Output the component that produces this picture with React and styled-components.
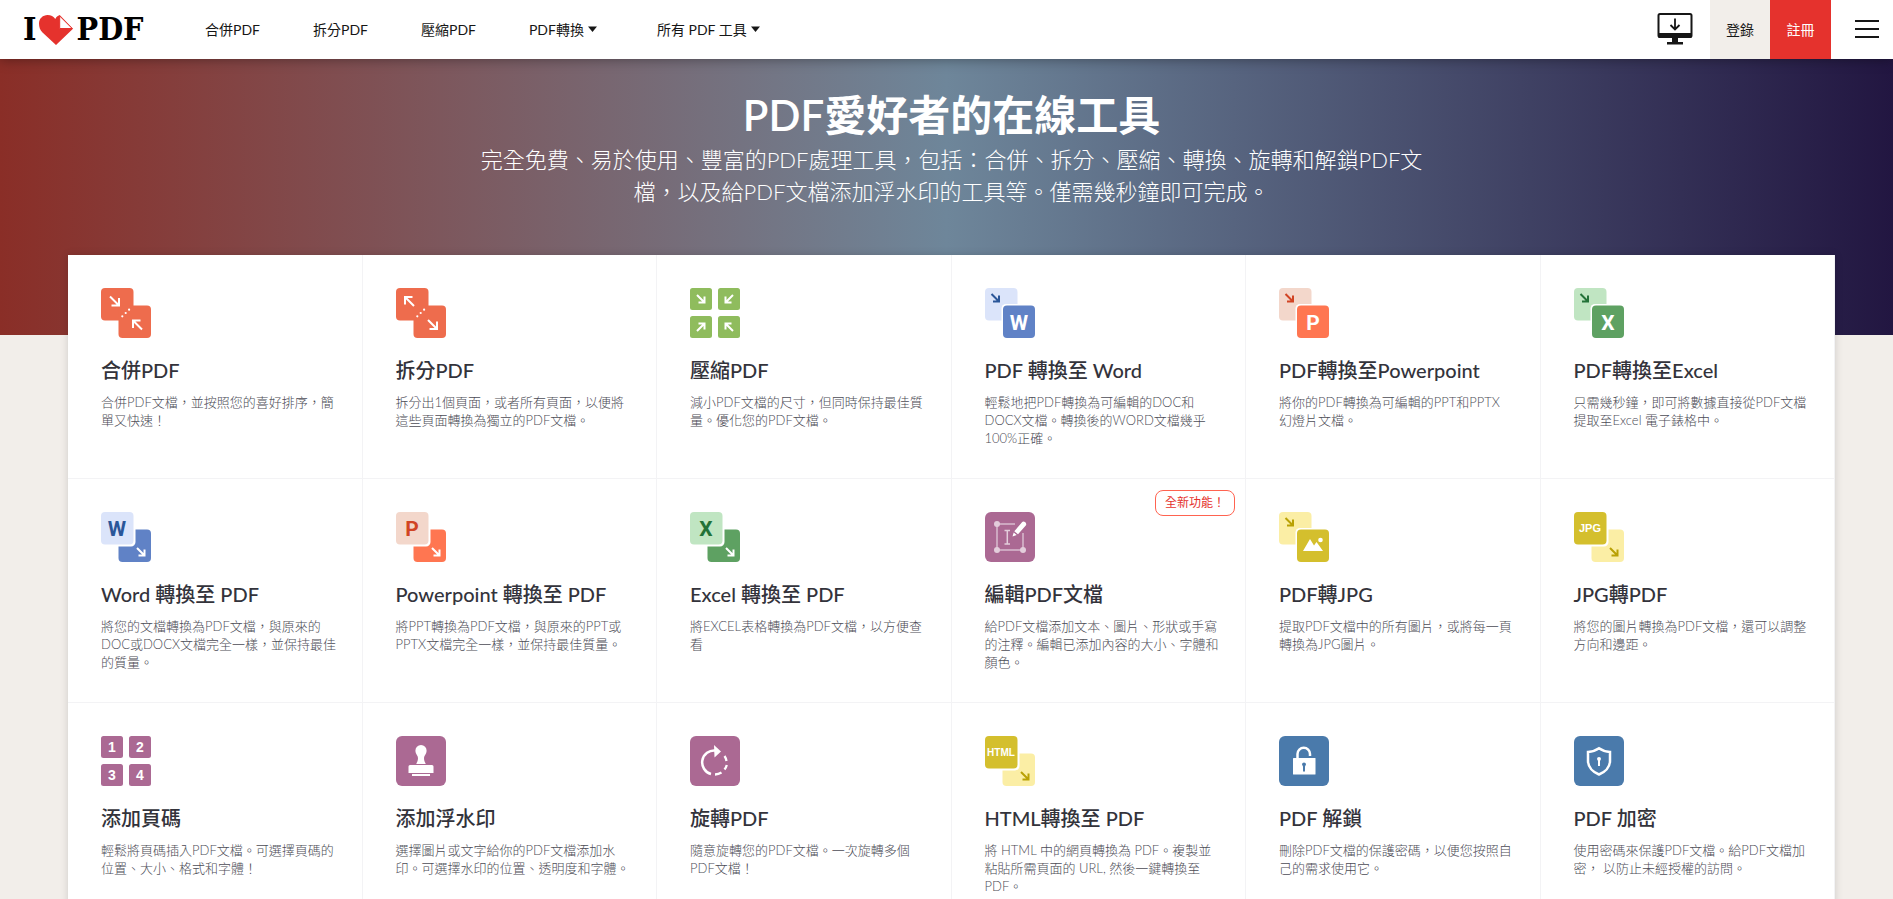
import React from "react";
import styled, { createGlobalStyle } from "styled-components";

const GlobalStyle = createGlobalStyle`
  *, *::before, *::after { box-sizing: border-box; }
  body {
    margin: 0;
    background: #f2eeea;
    color: #33333b;
    font-family: Lato, "Noto Sans CJK TC", sans-serif;
  }
  a { color: inherit; text-decoration: none; }
`;

const Page = styled.div`
  height: 100vh;
  display: flex;
  flex-direction: column;
`;

const Header = styled.header`
  position: relative;
  z-index: 2;
  flex: none;
  display: flex;
  align-items: stretch;
  height: 59px;
  background: #fff;
  box-shadow: 0 0 12px rgba(0, 0, 0, 0.4);
`;

const Logo = styled.a`
  display: flex;
  align-items: center;
  gap: 2px;
  width: 178px;
  padding-left: 23px;
  color: #000;
  font: bold 32px/59px "DejaVu Serif Condensed", "DejaVu Serif", serif;
`;

const Nav = styled.nav`
  display: flex;
  flex: 1;
`;

const NavLink = styled.a`
  display: flex;
  align-items: center;
  gap: 4px;
  padding: 0 26px 2px 27px;
  color: #161616;
  font-size: 14px;
  &[aria-haspopup] { padding-right: 33px; }
`;

const Actions = styled.div`
  display: flex;
`;

const IconLink = styled.a`
  display: flex;
  align-items: center;
  padding: 0 17px 2px;
`;

const AuthLink = styled.a`
  display: flex;
  align-items: center;
  justify-content: center;
  width: ${(p) => (p.$primary ? 61 : 60)}px;
  padding-bottom: 2px;
  background: ${(p) => (p.$primary ? "#e5322d" : "#f2eeea")};
  color: ${(p) => (p.$primary ? "#fff" : "#161616")};
  font-size: 14px;
`;

const MenuButton = styled.button`
  display: flex;
  align-items: center;
  padding: 0 14px 2px 24px;
  border: 0;
  background: none;
  cursor: pointer;
`;

const Main = styled.main`
  flex: 1;
  min-height: 0;
  overflow-y: auto;
  scrollbar-width: none;
`;

const Hero = styled.section`
  height: 276px;
  padding: 28px 58px 0 68px;
  background: linear-gradient(90deg, #8a2e27 0%, #6e869a 50%, #221641 100%);
  color: #fff;
  text-align: center;
`;

const HeroTitle = styled.h1`
  margin: 0;
  font-size: 42px;
  font-weight: 600;
  line-height: 56px;
`;

const HeroText = styled.p`
  margin: 1px auto 0;
  font-size: 22px;
  font-weight: 300;
  line-height: 32px;
  white-space: pre-line;
`;

const Tools = styled.section`
  display: grid;
  grid-template-columns: repeat(6, 1fr);
  margin: -80px 58px 32px 68px;
  background: #fff;
  box-shadow: 0 0 8px rgba(0, 0, 0, 0.15);
`;

const Card = styled.a`
  position: relative;
  min-height: 224px;
  padding: 33px 16px 31px 33px;
  border-right: 1px solid #f3f3f5;
  border-bottom: 1px solid #f3f3f5;
  svg { display: block; }
`;

const CardTitle = styled.h3`
  margin: 19px 0 10px;
  color: #33333b;
  font-size: 20px;
  font-weight: 500;
  line-height: 26px;
`;

const CardText = styled.p`
  margin: 0;
  color: #4c4c56;
  font-size: 13px;
  font-weight: 300;
  line-height: 18px;
  white-space: pre-line;
`;

const NewBadge = styled.span`
  position: absolute;
  top: 11px;
  right: 10px;
  padding: 0 9px;
  border: 1px solid #ff6350;
  border-radius: 8px;
  color: #e5322d;
  font-size: 12px;
  line-height: 24px;
`;

const Caret = () => (
  <svg width="9" height="6" viewBox="0 0 9 6" aria-hidden="true">
    <path d="M0 0.5h9L4.5 6z" fill="#161616" />
  </svg>
);

const Heart = () => (
  <svg width="36" height="32" viewBox="0 0 36 32" aria-label="love">
    <path
      d="M1 9.500C1 4.500 5 1 9.500 1c3.500 0 6 1.600 7.800 4 1-1.900 2.300-3 4.400-3.900L35 14.700 18 31 4.500 18.500C2 16 1 13 1 9.500z"
      fill="#e5322d"
    />
    <path d="M21.700 2v12.500h12.500z" fill="#fff" stroke="#e5322d" strokeWidth="1" strokeLinejoin="round" />
  </svg>
);

const Desktop = () => (
  <svg width="36" height="32" viewBox="0 0 36 32" fill="none" aria-hidden="true">
    <rect x="1.500" y="1" width="33" height="23" rx="1.500" stroke="#161616" strokeWidth="2" />
    <path d="M1 20h34v3a2 2 0 0 1-2 2H3a2 2 0 0 1-2-2zM15 25h6v4h5v2.500H10V29h5z" fill="#161616" />
    <path d="M18 5.500V16M13.500 12l4.500 4.500 4.500-4.500" stroke="#161616" strokeWidth="1.800" />
  </svg>
);

const Burger = () => (
  <svg width="24" height="18" viewBox="0 0 24 18" aria-hidden="true">
    <path d="M0 1h24M0 9h24M0 17h24" stroke="#161616" strokeWidth="2" />
  </svg>
);

/* Arrow with its tip at (x, y); (dx, dy) gives the direction, len the shaft's reach. */
const Arrow = ({ x, y, dx = 1, dy = 1, len = 9, color = "#fff", w = 2 }) => (
  <path
    d={`M${x - dx * len} ${y - dy * len}L${x} ${y}M${x} ${y - dy * (len - 1.500)}V${y}H${x - dx * (len - 1.500)}`}
    fill="none"
    stroke={color}
    strokeWidth={w}
  />
);

const Icon = ({ children }) => (
  <svg width="50" height="50" viewBox="0 0 50 50" aria-hidden="true">
    {children}
  </svg>
);

const PairIcon = ({ split }) => (
  <Icon>
    <rect width="32.500" height="32.500" rx="4" fill="#ee6c4d" />
    <rect x="17.500" y="17.500" width="32.500" height="32.500" rx="4" fill="#ee6c4d" />
    {[[21.300, 28.300], [24.700, 25], [28.100, 21.700]].map(([x, y]) => (
      <circle key={x} cx={x} cy={y} r="1.100" fill="#fff" />
    ))}
    {split ? (
      <>
        <Arrow x={9} y={9} dx={-1} dy={-1} />
        <Arrow x={41} y={41} />
      </>
    ) : (
      <>
        <Arrow x={18} y={17.500} />
        <Arrow x={32} y={32.500} dx={-1} dy={-1} />
      </>
    )}
  </Icon>
);

const quadSpots = [[0, 0], [28, 0], [0, 28], [28, 28]];

const CompressIcon = () => (
  <Icon>
    {quadSpots.map(([x, y]) => (
      <g key={`${x}-${y}`}>
        <rect x={x} y={y} width="22" height="22" rx="2.500" fill="#8fbc5d" />
        <Arrow
          x={x ? x + 7.500 : x + 14.500}
          y={y ? y + 7.500 : y + 14.500}
          dx={x ? -1 : 1}
          dy={y ? -1 : 1}
          len={7.500}
        />
      </g>
    ))}
  </Icon>
);

const NumbersIcon = () => (
  <Icon>
    {quadSpots.map(([x, y], i) => (
      <g key={`${x}-${y}`}>
        <rect x={x} y={y} width="22" height="22" rx="2.500" fill="#ab6993" />
        <text x={x + 11} y={y + 16} textAnchor="middle" fontFamily="Liberation Sans" fontWeight="700" fontSize="14" fill="#fff">
          {i + 1}
        </text>
      </g>
    ))}
  </Icon>
);

const Letter = ({ cx, cy, color, children, size = 21 }) => (
  <text
    x={cx}
    y={cy + size * 0.360}
    textAnchor="middle"
    fontFamily={size < 15 ? "Liberation Sans" : "Roboto"}
    fontWeight="700"
    fontSize={size}
    fill={color}
  >
    {children}
  </text>
);

const Picture = () => (
  <>
    <path d="M24 39l7-12 4 6.500 2.500-3.500L44 39z" fill="#fff" />
    <circle cx="41.500" cy="28" r="2.300" fill="#fff" />
  </>
);

/* A page behind with an arrow, and the target format's page in front at the lower right. */
const FromPdfIcon = ({ pale, solid, ink, letter }) => (
  <Icon>
    <rect width="32.500" height="32.500" rx="4" fill={pale} />
    <Arrow x={14} y={13.500} len={7.500} color={ink} />
    <rect x="16.500" y="16" width="36" height="36" rx="4.500" fill="#fff" />
    <rect x="18" y="17.500" width="32" height="32.500" rx="4" fill={solid} />
    {letter ? <Letter cx={34} cy={34} color="#fff">{letter}</Letter> : <Picture />}
  </Icon>
);

/* The source format's page in front at the upper left, the arrow on the page behind. */
const ToPdfIcon = ({ front, back, ink, arrow, letter, size }) => (
  <Icon>
    <rect x="17.500" y="17.500" width="32.500" height="32.500" rx="4" fill={back} />
    <Arrow x={43.500} y={43.500} len={7.500} color={arrow} />
    <rect x="-2" y="-2" width="36.500" height="36.500" rx="4.500" fill="#fff" />
    <rect width="32.500" height="32.500" rx="4" fill={front} />
    <Letter cx={16} cy={16} color={ink} size={size}>{letter}</Letter>
  </Icon>
);

const EditIcon = () => (
  <Icon>
    <rect width="50" height="50" rx="6" fill="#ab6993" />
    <path d="M12 12h18M12 12v26h26V21" fill="none" stroke="#d9bccf" strokeWidth="1.500" />
    <path d="M19.500 18.500h5.500M19.500 32h5.500M22.300 18.500V32" stroke="#e3cddb" strokeWidth="1.500" />
    {[[12, 12], [12, 38], [38, 38]].map(([x, y]) => (
      <circle key={`${x}-${y}`} cx={x} cy={y} r="3" fill="#e3cddb" />
    ))}
    <path d="M37 10.200c1.500-1.700 5.200.6 4 3L33 22.200l-3.700-2.900zM28.700 20.500l3 2.400-4.200 1.600z" fill="#fff" />
  </Icon>
);

const StampIcon = () => (
  <Icon>
    <rect width="50" height="50" rx="6" fill="#ab6993" />
    <path
      d="M25 9a5.700 5.700 0 0 1 5.600 6c0 3-2.600 4.500-2.600 7 0 2.600.8 4 1.800 6H20.200c1-2 1.800-3.400 1.800-6 0-2.500-2.600-4-2.600-7A5.700 5.700 0 0 1 25 9zM14 29h22a1.500 1.500 0 0 1 1.500 1.500V37h-25v-6.500A1.500 1.500 0 0 1 14 29zM16 38h18v2H16z"
      fill="#fff"
    />
  </Icon>
);

const RotateIcon = () => (
  <Icon>
    <rect width="50" height="50" rx="6" fill="#ab6993" />
    <path d="M25.500 14.500A12 12 0 0 0 21 38" fill="none" stroke="#fff" strokeWidth="2.500" />
    <path d="M24 9l7 6.500-6.500 6z" fill="#fff" />
    <path d="M34.500 20a12 12 0 0 1 2 5M36.800 29a12 12 0 0 1-2.300 4.500M31.500 36.500a12 12 0 0 1-6.500 2" fill="none" stroke="#fff" strokeWidth="2.300" />
  </Icon>
);

const Keyhole = ({ x, y, color }) => (
  <path d={`M${x - 2} ${y}a2 2 0 1 1 4 0l-1 2v5h-2v-5z`} fill={color} />
);

const UnlockIcon = () => (
  <Icon>
    <rect width="50" height="50" rx="6" fill="#4a7aab" />
    <path d="M18.500 22.500V18a6 6 0 0 1 12.500 0v2" fill="none" stroke="#fff" strokeWidth="2.500" />
    <rect x="14" y="22" width="22.500" height="16.500" rx="0.500" fill="#fff" />
    <Keyhole x={25} y={28.500} color="#4a7aab" />
  </Icon>
);

const ProtectIcon = () => (
  <Icon>
    <rect width="50" height="50" rx="6" fill="#4a7aab" />
    <path d="M25 12.300c3.500 2.500 7 3.400 11 3.700v9c0 6-5 11-11 13.500C19 36 14 31 14 25v-9c4-.3 7.500-1.200 11-3.700z" fill="none" stroke="#fff" strokeWidth="2.500" />
    <Keyhole x={25} y={23} color="#fff" />
  </Icon>
);

const word = { pale: "#dbe4fa", solid: "#6082c6", ink: "#2a5699" };
const ppt = { pale: "#f3d7cb", solid: "#ff7651", ink: "#d14424" };
const xls = { pale: "#c0e5c2", solid: "#5ea162", ink: "#237238" };
const jpg = { pale: "#fbeea5", solid: "#d4bf2d", ink: "#b9a105" };

const tools = [
  { title: "合併PDF", text: "合併PDF文檔，並按照您的喜好排序，簡\n單又快速！", icon: <PairIcon /> },
  { title: "拆分PDF", text: "拆分出1個頁面，或者所有頁面，以便將\n這些頁面轉換為獨立的PDF文檔。", icon: <PairIcon split /> },
  { title: "壓縮PDF", text: "減小PDF文檔的尺寸，但同時保持最佳質\n量。優化您的PDF文檔。", icon: <CompressIcon /> },
  { title: "PDF 轉換至 Word", text: "輕鬆地把PDF轉換為可編輯的DOC和\nDOCX文檔。轉換後的WORD文檔幾乎\n100%正確。", icon: <FromPdfIcon {...word} letter="W" /> },
  { title: "PDF轉換至Powerpoint", text: "將你的PDF轉換為可編輯的PPT和PPTX\n幻燈片文檔。", icon: <FromPdfIcon {...ppt} letter="P" /> },
  { title: "PDF轉換至Excel", text: "只需幾秒鐘，即可將數據直接從PDF文檔\n提取至Excel 電子錶格中。", icon: <FromPdfIcon {...xls} letter="X" /> },
  { title: "Word 轉換至 PDF", text: "將您的文檔轉換為PDF文檔，與原來的\nDOC或DOCX文檔完全一樣，並保持最佳\n的質量。", icon: <ToPdfIcon front={word.pale} back={word.solid} ink={word.ink} arrow="#fff" letter="W" /> },
  { title: "Powerpoint 轉換至 PDF", text: "將PPT轉換為PDF文檔，與原來的PPT或\nPPTX文檔完全一樣，並保持最佳質量。", icon: <ToPdfIcon front={ppt.pale} back={ppt.solid} ink={ppt.ink} arrow="#fff" letter="P" /> },
  { title: "Excel 轉換至 PDF", text: "將EXCEL表格轉換為PDF文檔，以方便查\n看", icon: <ToPdfIcon front={xls.pale} back={xls.solid} ink={xls.ink} arrow="#fff" letter="X" /> },
  { title: "編輯PDF文檔", text: "給PDF文檔添加文本、圖片、形狀或手寫\n的注釋。編輯已添加內容的大小、字體和\n顏色。", icon: <EditIcon />, isNew: true },
  { title: "PDF轉JPG", text: "提取PDF文檔中的所有圖片，或將每一頁\n轉換為JPG圖片。", icon: <FromPdfIcon {...jpg} /> },
  { title: "JPG轉PDF", text: "將您的圖片轉換為PDF文檔，還可以調整\n方向和邊距。", icon: <ToPdfIcon front={jpg.solid} back={jpg.pale} ink="#fff" arrow={jpg.ink} letter="JPG" size={11} /> },
  { title: "添加頁碼", text: "輕鬆將頁碼插入PDF文檔。可選擇頁碼的\n位置、大小、格式和字體！", icon: <NumbersIcon /> },
  { title: "添加浮水印", text: "選擇圖片或文字給你的PDF文檔添加水\n印。可選擇水印的位置、透明度和字體。", icon: <StampIcon /> },
  { title: "旋轉PDF", text: "隨意旋轉您的PDF文檔。一次旋轉多個\nPDF文檔！", icon: <RotateIcon /> },
  { title: "HTML轉換至 PDF", text: "將 HTML 中的網頁轉換為 PDF。複製並\n粘貼所需頁面的 URL, 然後一鍵轉換至\nPDF。", icon: <ToPdfIcon front={jpg.solid} back={jpg.pale} ink="#fff" arrow={jpg.ink} letter="HTML" size={10} /> },
  { title: "PDF 解鎖", text: "刪除PDF文檔的保護密碼，以便您按照自\n己的需求使用它。", icon: <UnlockIcon /> },
  { title: "PDF 加密", text: "使用密碼來保護PDF文檔。給PDF文檔加\n密， 以防止未經授權的訪問。", icon: <ProtectIcon /> },
];

export default function App() {
  return (
    <Page lang="zh-Hant">
      <GlobalStyle />
      <Header>
        <Logo href="#">
          I<Heart />PDF
        </Logo>
        <Nav>
          <NavLink href="#">合併PDF</NavLink>
          <NavLink href="#">拆分PDF</NavLink>
          <NavLink href="#">壓縮PDF</NavLink>
          <NavLink href="#" aria-haspopup="true">PDF轉換<Caret /></NavLink>
          <NavLink href="#" aria-haspopup="true">所有 PDF 工具<Caret /></NavLink>
        </Nav>
        <Actions>
          <IconLink href="#" aria-label="Desktop"><Desktop /></IconLink>
          <AuthLink href="#">登錄</AuthLink>
          <AuthLink href="#" $primary>註冊</AuthLink>
          <MenuButton type="button" aria-label="Menu"><Burger /></MenuButton>
        </Actions>
      </Header>
      <Main>
        <Hero>
          <HeroTitle>PDF愛好者的在線工具</HeroTitle>
          <HeroText>
            {"完全免費、易於使用、豐富的PDF處理工具，包括：合併、拆分、壓縮、轉換、旋轉和解鎖PDF文\n檔，以及給PDF文檔添加浮水印的工具等。僅需幾秒鐘即可完成。"}
          </HeroText>
        </Hero>
        <Tools>
          {tools.map((t) => (
            <Card href="#" key={t.title}>
              {t.icon}
              {t.isNew && <NewBadge>全新功能！</NewBadge>}
              <CardTitle>{t.title}</CardTitle>
              <CardText>{t.text}</CardText>
            </Card>
          ))}
        </Tools>
      </Main>
    </Page>
  );
}
